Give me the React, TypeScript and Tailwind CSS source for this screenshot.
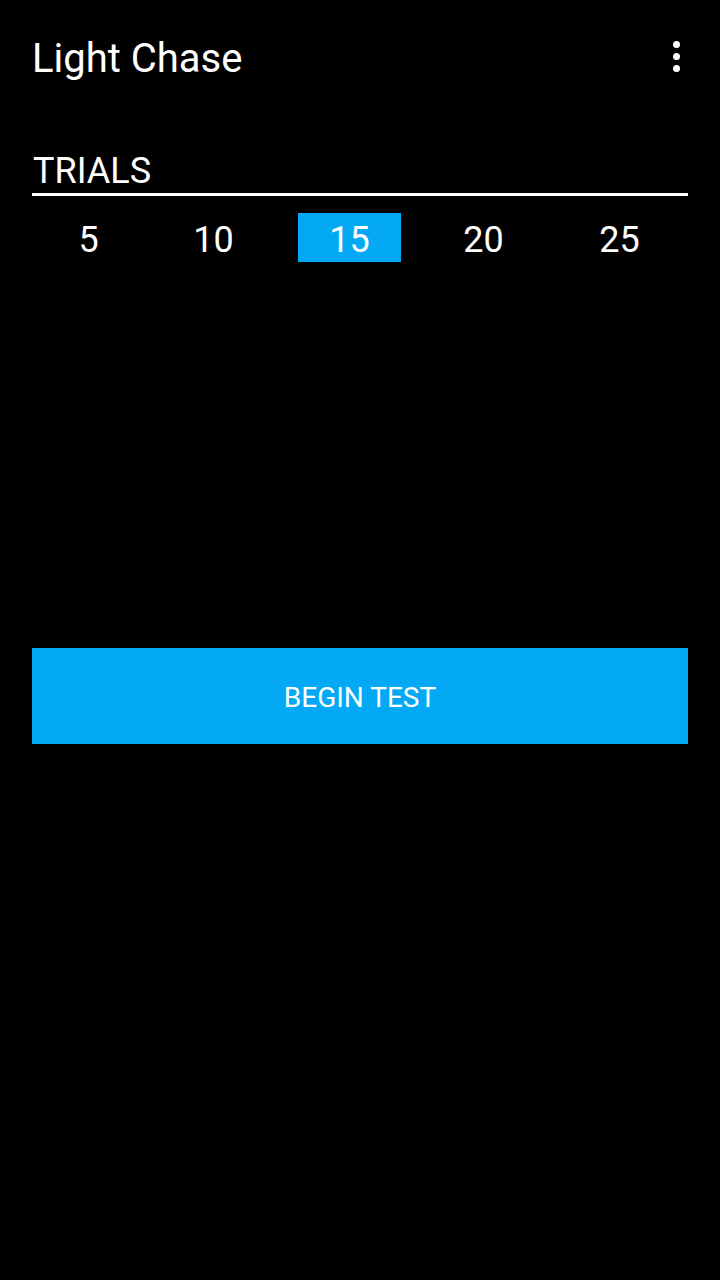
import React from "react";

const trials = [
  { n: 5, ml: "ml-[5px]" },
  { n: 10, ml: "ml-[22px]" },
  { n: 15, ml: "ml-[33px]" },
  { n: 20, ml: "ml-[31px]" },
  { n: 25, ml: "ml-[33px]" },
];

const App: React.FC = () => {
  const selected = 15;
  return (
    <div className="min-h-screen w-[720px] h-[1280px] bg-black text-white font-['Roboto',sans-serif]">
      {/* action bar */}
      <header className="h-[112px] flex items-center justify-between pl-[32px] pr-[40px]">
        <h1 className="text-[40px] leading-none mt-[6px]">Light Chase</h1>
        <div className="flex flex-col gap-[5px] items-center">
          <span className="w-[7px] h-[7px] rounded-full bg-white" />
          <span className="w-[7px] h-[7px] rounded-full bg-white" />
          <span className="w-[7px] h-[7px] rounded-full bg-white" />
        </div>
      </header>

      <main className="px-[32px]">
        <div className="mt-[41px] border-b-[3px] border-white pb-[4px]">
          <h2 className="text-[36px] leading-none pl-[1px]">TRIALS</h2>
        </div>
        <div className="flex mt-[17px]">
          {trials.map((t) => (
            <div
              key={t.n}
              className={`${t.ml} w-[103px] h-[49px] pt-[5px] flex items-center justify-center text-[36px] ${
                t.n === selected ? "bg-[#03a9f4]" : ""
              }`}
            >
              {t.n}
            </div>
          ))}
        </div>

        <button className="mt-[386px] w-full h-[96px] pt-[4px] bg-[#03a9f4] text-[28px] text-white">
          BEGIN TEST
        </button>
      </main>
    </div>
  );
};

export default App;
